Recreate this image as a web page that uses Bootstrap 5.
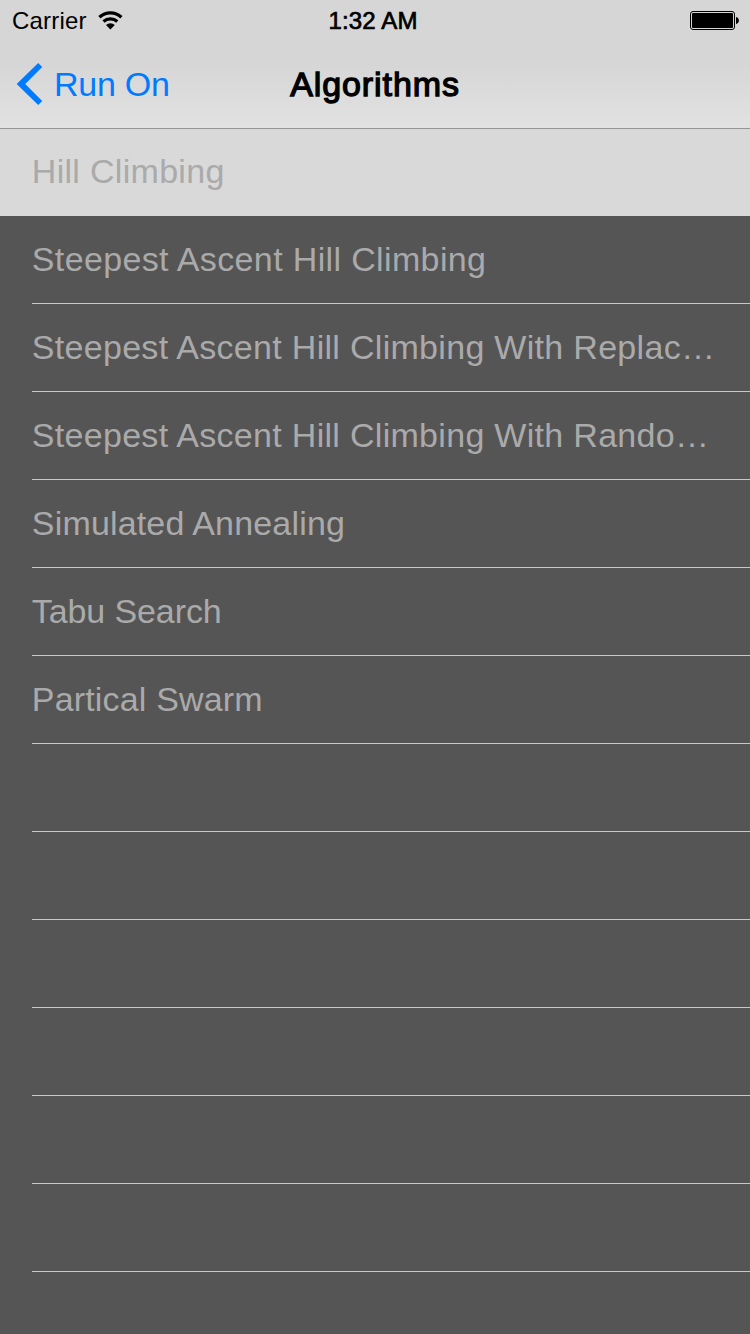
<!DOCTYPE html>
<html lang="en">
<head>
<meta charset="utf-8">
<meta name="viewport" content="width=device-width, initial-scale=1">
<title>Algorithms</title>
<link href="https://cdn.jsdelivr.net/npm/bootstrap@5.3.0/dist/css/bootstrap.min.css" rel="stylesheet">
<style>
  body { background: #555; color: #000; font-family: "Liberation Sans", Arial, sans-serif; height: 1334px; }
  .top-area { height: 129px; background: linear-gradient(#d6d6d6 0, #d6d6d6 64px, #e2e2e2 128px); border-bottom: 1px solid #969696; }
  .status-bar { height: 40px; font-size: 24px; line-height: 40px; padding: 1px 11px 0 12px; }
  .side { flex: 1 1 0; }
  .carrier { letter-spacing: .2px; }
  .clock { -webkit-text-stroke: .7px #000; letter-spacing: .15px; padding-right: 5px; }
  .title-bar { height: 88px; padding: 0 17px; font-size: 34px; line-height: 88px; }
  .back-link { color: #007aff; gap: 11px; height: 88px; letter-spacing: -.25px; }
  .screen-title { font-size: 34px; line-height: 88px; font-weight: 400; letter-spacing: .9px; -webkit-text-stroke: 1.3px #000; }
  .algorithms { color: #aaa; font-size: 34px; --track: .3px; }
  .algo { height: 88px; padding-left: 32px; }
  .algo-label { height: 88px; line-height: 87px; border-bottom: 1px solid #c8c7cc; letter-spacing: var(--track); text-indent: -.2px; }
  .algo.selected { height: 87px; background: #d9d9d9; }
  .selected .algo-label { height: 87px; line-height: 85px; border-bottom: 0; --track: .3px; }
  .track-wide { --track: .36px; }
  .track-mid { --track: .17px; }
  .track-none { --track: -.1px; }
</style>
</head>
<body class="overflow-hidden">
<header class="top-area">
  <div class="status-bar d-flex align-items-center">
    <div class="side d-flex align-items-center">
      <span class="carrier">Carrier</span>
      <svg class="ms-2" width="30" height="24" viewBox="0 0 30 24" fill="none" stroke="#000" aria-hidden="true">
        <path d="M4.4 8.2a16.2 16.2 0 0 1 22 0" stroke-width="3.3"/>
        <path d="M8.5 12.5a10.4 10.4 0 0 1 13.8 0" stroke-width="3.2"/>
        <path d="M15.4 20.6l-4.4-4.5a6.3 6.3 0 0 1 8.8 0z" fill="#000" stroke="none"/>
      </svg>
    </div>
    <time class="clock">1:32 AM</time>
    <div class="side d-flex justify-content-end">
      <svg width="49" height="20" viewBox="0 0 49 20" aria-hidden="true">
        <rect x=".5" y=".5" width="44" height="18" rx="2.5" fill="none" stroke="#000"/>
        <rect x="2" y="2" width="41" height="15" rx="1" fill="#000"/>
        <path d="M46 6c3.8.5 3.8 6.5 0 7z" fill="#000"/>
      </svg>
    </div>
  </div>
  <nav class="title-bar d-flex align-items-center">
    <div class="side">
      <a href="#" class="back-link d-flex align-items-center text-decoration-none">
        <svg width="26" height="42" viewBox="0 0 26 42" overflow="visible" aria-hidden="true"><path d="M21.2 0L25.2 4 8.2 21l17 17-4 4L-.3 21z" fill="#007aff"/></svg>
        <span>Run On</span>
      </a>
    </div>
    <h1 class="screen-title m-0">Algorithms</h1>
    <div class="side"></div>
  </nav>
</header>
<main>
  <ul class="algorithms list-unstyled m-0">
    <li class="algo selected"><div class="algo-label text-nowrap">Hill Climbing</div></li>
    <li class="algo"><div class="algo-label text-nowrap track-wide">Steepest Ascent Hill Climbing</div></li>
    <li class="algo"><div class="algo-label text-nowrap">Steepest Ascent Hill Climbing With Replac…</div></li>
    <li class="algo"><div class="algo-label text-nowrap">Steepest Ascent Hill Climbing With Rando…</div></li>
    <li class="algo"><div class="algo-label text-nowrap track-mid">Simulated Annealing</div></li>
    <li class="algo"><div class="algo-label text-nowrap track-none">Tabu Search</div></li>
    <li class="algo"><div class="algo-label text-nowrap track-mid">Partical Swarm</div></li>
    <li class="algo"><div class="algo-label"></div></li>
    <li class="algo"><div class="algo-label"></div></li>
    <li class="algo"><div class="algo-label"></div></li>
    <li class="algo"><div class="algo-label"></div></li>
    <li class="algo"><div class="algo-label"></div></li>
    <li class="algo"><div class="algo-label"></div></li>
  </ul>
</main>
<script src="https://cdn.jsdelivr.net/npm/bootstrap@5.3.0/dist/js/bootstrap.bundle.min.js"></script>
</body>
</html>
